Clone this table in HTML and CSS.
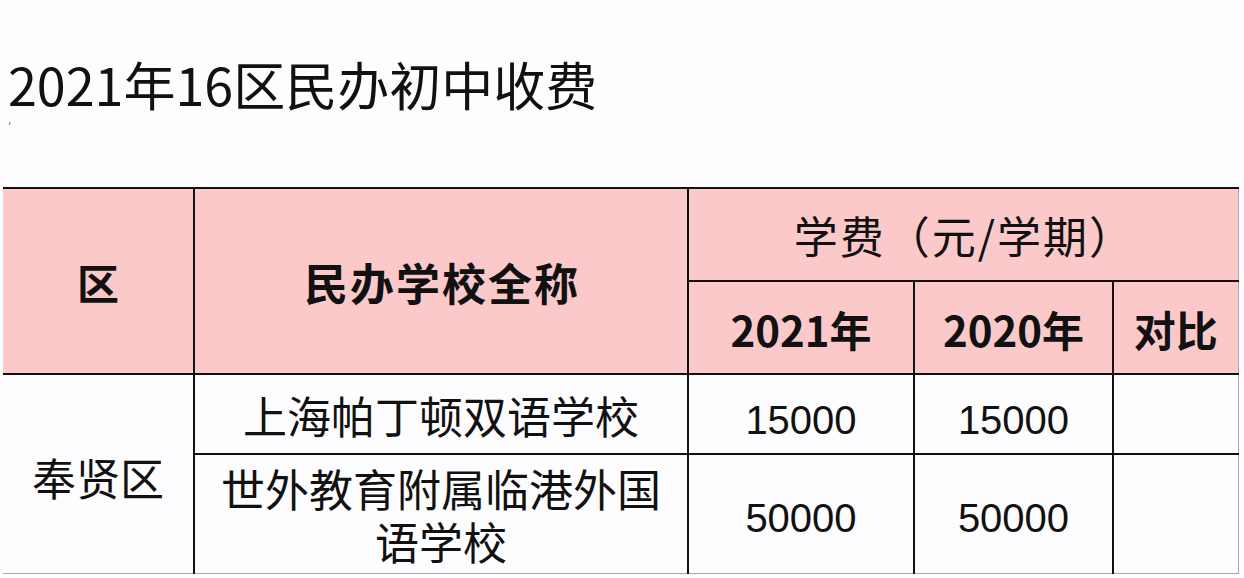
FILE: index.html
```html
<!DOCTYPE html>
<html lang="zh-CN">
<head>
<meta charset="utf-8">
<title>2021年16区民办初中收费</title>
<link rel="stylesheet" href="styles.css">
</head>
<body>
<div class="page">
  <header class="head">
    <h1 class="title">2021年16区民办初中收费</h1>
    <span class="tick">′</span>
  </header>
  <table class="fees">
    <colgroup>
      <col class="c-district">
      <col class="c-school">
      <col class="c-y21">
      <col class="c-y20">
      <col class="c-cmp">
    </colgroup>
    <thead>
      <tr class="r-h1">
        <th rowspan="2" class="bold">区</th>
        <th rowspan="2" class="bold spaced">民办学校全称</th>
        <th colspan="3" class="normal">学费（元/学期）</th>
      </tr>
      <tr class="r-h2">
        <th class="bold">2021年</th>
        <th class="bold">2020年</th>
        <th class="bold">对比</th>
      </tr>
    </thead>
    <tbody>
      <tr class="r-d1">
        <td rowspan="2" class="cjk district">奉贤区</td>
        <td class="cjk">上海帕丁顿双语学校</td>
        <td class="num">15000</td>
        <td class="num">15000</td>
        <td class="last"></td>
      </tr>
      <tr class="r-d2">
        <td class="cjk wrap">世外教育附属临港外国<br>语学校</td>
        <td class="num">50000</td>
        <td class="num">50000</td>
        <td class="last"></td>
      </tr>
    </tbody>
  </table>
</div>
</body>
</html>
```

FILE: styles.css
```css
html, body {
  margin: 0;
  padding: 0;
  background: #fdfcfe;
}

.page {
  width: 1244px;
  height: 578px;
  overflow: hidden;
  font-family: "Noto Sans CJK SC", "Noto Sans", sans-serif;
  color: #111;
}

.head {
  height: 187px;
  padding-left: 8px;
  box-sizing: border-box;
  padding-top: 57px;
}

.title {
  margin: 0;
  font-size: 52px;
  line-height: 53px;
  font-weight: 400;
}

.tick {
  display: block;
  font-size: 11px;
  line-height: 11px;
  margin-top: 11px;
  color: #666;
}

.fees {
  margin-left: 3px;
  border-collapse: collapse;
  table-layout: fixed;
  width: 1235px;
}

.c-district { width: 191px; }
.c-school { width: 494px; }
.c-y21 { width: 226px; }
.c-y20 { width: 199px; }
.c-cmp { width: 125px; }

.fees th,
.fees td {
  border: 2px solid #111;
  padding: 0;
  text-align: center;
  vertical-align: middle;
}

.fees tr > :first-child {
  border-left: none;
}

.fees tr > :last-child,
.fees .last {
  border-right: 1px solid #a9a7ab;
}

.fees thead th {
  background: #fcc9cb;
}

.r-d2 td,
.r-d1 td[rowspan] {
  border-bottom: 1px solid #a9a7ab;
}

.r-h1 { height: 93px; }
.r-h2 { height: 93px; }
.r-d1 { height: 80px; }
.r-d2 { height: 119px; }

.bold {
  font-weight: 700;
  font-size: 42px;
  line-height: 50px;
}

.fees th.bold { padding-top: 2px; }

.spaced {
  font-size: 44px;
  letter-spacing: 2px;
  text-indent: 2px;
}

.normal {
  font-weight: 400;
  font-size: 44px;
  line-height: 50px;
  letter-spacing: 2px;
  text-indent: 2px;
  padding-top: 8px;
}

.cjk {
  font-size: 44px;
  line-height: 53px;
  font-weight: 400;
}

.fees td.cjk { padding-top: 2px; }

.fees td.district { padding-top: 8px; }

.fees td.wrap { padding-top: 2px; }

.num {
  font-family: "Liberation Sans", Arial, sans-serif;
  font-size: 40px;
  line-height: 46px;
}

.fees td.num { padding-top: 12px; }

.r-d2 td.num { padding-top: 8px; }
```
